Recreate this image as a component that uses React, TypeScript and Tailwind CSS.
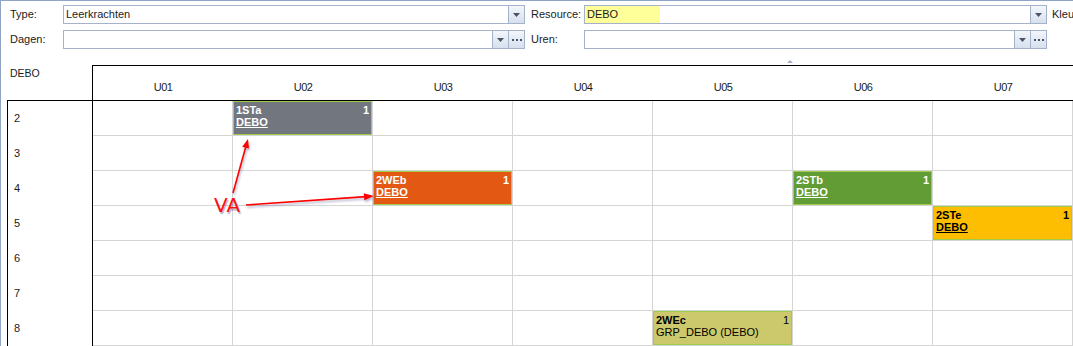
import React from "react";

type Ev = {
  code: string;
  who: string;
  bg: string;
  dark?: boolean;
  plain?: boolean;
};

const cols = ["U01", "U02", "U03", "U04", "U05", "U06", "U07"];
const rows = [2, 3, 4, 5, 6, 7, 8];

// rij-kolom -> les
const events: Record<string, Ev> = {
  "2-1": { code: "1STa", who: "DEBO", bg: "bg-[#71767f]" },
  "4-2": { code: "2WEb", who: "DEBO", bg: "bg-[#e35914]" },
  "4-5": { code: "2STb", who: "DEBO", bg: "bg-[#619c34]" },
  "5-6": { code: "2STe", who: "DEBO", bg: "bg-[#fdbd00]", dark: true },
  "8-4": { code: "2WEc", who: "GRP_DEBO (DEBO)", bg: "bg-[#cbc96b]", dark: true, plain: true },
};

function Arrow() {
  return (
    <svg width="7" height="4" viewBox="0 0 7 4">
      <path d="M0 0h7L3.5 4z" fill="#4b5466" />
    </svg>
  );
}

function Dots() {
  return (
    <div className="flex gap-[2px]">
      <span className="h-[2px] w-[2px] bg-[#4b5466]" />
      <span className="h-[2px] w-[2px] bg-[#4b5466]" />
      <span className="h-[2px] w-[2px] bg-[#4b5466]" />
    </div>
  );
}

function Field({
  width,
  value,
  highlight,
  dots,
}: {
  width: string;
  value?: string;
  highlight?: boolean;
  dots?: boolean;
}) {
  return (
    <div className={`flex h-[19px] shrink-0 border border-[#a5b3ca] bg-white ${width}`}>
      <div className="flex flex-1 items-stretch">
        {value && (
          <div
            className={`flex items-center pl-[2px] ${highlight ? "w-[75px] bg-[#ffff99]" : ""}`}
          >
            {value}
          </div>
        )}
      </div>
      <div className="flex w-[16px] items-center justify-center border-l border-[#a5b3ca] bg-gradient-to-b from-[#f3f6fb] to-[#d6e0ee]">
        <Arrow />
      </div>
      {dots && (
        <div className="flex w-[16px] items-center justify-center border-l border-[#a5b3ca] bg-gradient-to-b from-[#f3f6fb] to-[#d6e0ee]">
          <Dots />
        </div>
      )}
    </div>
  );
}

function Lesson({ ev }: { ev: Ev }) {
  const txt = ev.dark ? "text-black" : "text-white";
  return (
    <div
      className={`h-full w-full border border-[#9fcd4a] px-[2px] pt-[2px] text-[11px] leading-[12px] ${ev.bg} ${txt}`}
    >
      <div className="flex justify-between font-bold">
        <span>{ev.code}</span>
        <span className={ev.plain ? "font-normal" : ""}>1</span>
      </div>
      <div
        className={
          ev.plain ? "" : "font-bold underline decoration-1 underline-offset-[1px]"
        }
      >
        {ev.who}
      </div>
    </div>
  );
}

export default function App() {
  return (
    <div className="relative h-[346px] w-[1073px] overflow-hidden border-l border-t border-[#8fa3c5] bg-white font-['Liberation_Sans',Arial,sans-serif] text-[11px] text-[#1b1b1b]">
      {/* filter */}
      <div className="flex flex-col gap-[6px] pt-[4px] whitespace-nowrap">
        <div className="flex items-center pl-[9px]">
          <div className="w-[53px] shrink-0">Type:</div>
          <Field width="w-[462px]" value="Leerkrachten" />
          <div className="ml-[6px] w-[53px] shrink-0">Resource:</div>
          <Field width="w-[463px]" value="DEBO" highlight />
          <div className="ml-[5px] shrink-0">Kleur</div>
        </div>
        <div className="flex items-center pl-[9px]">
          <div className="w-[53px] shrink-0">Dagen:</div>
          <Field width="w-[462px]" dots />
          <div className="ml-[6px] w-[53px] shrink-0">Uren:</div>
          <Field width="w-[463px]" dots />
        </div>
      </div>

      <div className="flex h-[16px] items-start pl-[786px] pt-[11px]">
        <svg width="6" height="3" viewBox="0 0 6 3">
          <path d="M0 3L3 0l3 3z" fill="#a3b0c2" />
        </svg>
      </div>

      {/* kolomkoppen */}
      <div className="flex h-[35px]">
        <div className="w-[91px] shrink-0 pl-[9px] pt-[2px] text-[10.5px] leading-[13px]">DEBO</div>
        <div className="flex shrink-0 border-l border-t border-black">
          {cols.map((c) => (
            <div
              key={c}
              className="w-[140px] shrink-0 pt-[15px] text-center text-[11px] leading-[13px] tracking-[-0.6px]"
            >
              {c}
            </div>
          ))}
        </div>
      </div>

      {/* rooster */}
      <div className="ml-[6px] border-l border-t border-black">
        {rows.map((r) => (
          <div key={r} className="flex h-[35px]">
            <div className="flex w-[85px] shrink-0 items-center border-r border-black pl-[6px] text-[11px]">
              {r}
            </div>
            {cols.map((c, ci) => {
              const ev = events[`${r}-${ci}`];
              return (
                <div
                  key={c}
                  className="h-[35px] w-[140px] shrink-0 border-b border-r border-[#d5d5d5]"
                >
                  {ev && <Lesson ev={ev} />}
                </div>
              );
            })}
          </div>
        ))}
      </div>

      {/* annotatie */}
      <svg
        className="pointer-events-none absolute left-[-1px] top-[-1px] drop-shadow-[1px_2px_1px_rgba(40,40,110,0.35)]"
        width="1073"
        height="346"
      >
        <line x1="233" y1="193" x2="246" y2="146" stroke="#ff0000" strokeWidth="1.6" />
        <polygon points="248,139 249,148.6 242.2,146.8" fill="#ff0000" />
        <line x1="246" y1="205" x2="366" y2="196.6" stroke="#ff0000" strokeWidth="1.6" />
        <polygon points="374,196 364.3,200.2 363.7,193.2" fill="#ff0000" />
      </svg>
      <span className="pointer-events-none absolute left-[213px] top-[194px] font-['DejaVu_Sans',sans-serif] text-[20px] leading-[20px] text-[#ff1010] [text-shadow:1px_2px_1px_rgba(40,40,110,0.35)]">
        VA
      </span>
    </div>
  );
}
